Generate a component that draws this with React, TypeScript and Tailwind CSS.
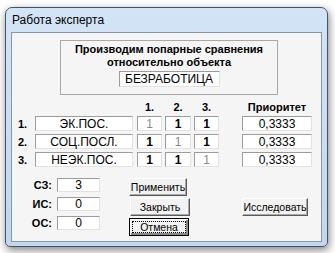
import React from 'react';

const sunken = 'bg-white border border-t-[#9c9c9c] border-l-[#9c9c9c] border-r-[#e2e2e2] border-b-[#e2e2e2] flex items-center justify-center';
const raised =
  'bg-[#f2f2f2] border border-t-white border-l-white border-r-[#5a5a5a] border-b-[#5a5a5a] shadow-[inset_-1px_-1px_0_#a9a9a9] flex items-center justify-center text-[10.5px] text-black leading-none';

const rows = [
  { n: '1.', name: 'ЭК.ПОС.', cells: ['1', '1', '1'], diag: 0 },
  { n: '2.', name: 'СОЦ.ПОСЛ.', cells: ['1', '1', '1'], diag: 1 },
  { n: '3.', name: 'НЕЭК.ПОС.', cells: ['1', '1', '1'], diag: 2 },
];

const cellWidths = ['w-[25px]', 'w-[26px]', 'w-[25px]'];

export default function App() {
  return (
    <div className="w-[335px] h-[253px] bg-white overflow-hidden font-['Liberation_Sans',Arial,sans-serif] text-black">
      <div className="ml-[5px] mt-[7px] w-[323px] h-[240px] rounded-t-[7px] rounded-b-[5px] border border-[#44546a] bg-gradient-to-b from-[#d3e4f6] to-[#c2d7ee] shadow-[1px_3px_8px_rgba(0,0,0,0.5)] flex flex-col px-[5px] pb-[4px]">
        <div className="h-[24px] flex items-center pl-[1px] text-[12px] leading-none">Работа эксперта</div>

        <div className="flex-1 border border-[#8796ab] bg-[#f5f5f5] flex flex-col">
          {/* question box */}
          <div className="mt-[7px] ml-[48px] w-[218px] h-[55px] border border-[#a9a9a9] flex flex-col items-center">
            <div className="mt-[2px] text-[11px] font-bold leading-[13px]">Производим попарные сравнения</div>
            <div className="text-[11px] font-bold leading-[13px]">относительно объекта</div>
            <div className={`${sunken} mt-[2px] w-[101px] h-[16px] text-[12px] leading-none`}>БЕЗРАБОТИЦА</div>
          </div>

          {/* matrix header */}
          <div className="mt-[6px] flex pl-[6px] h-[13px] items-center text-[11px] font-bold leading-none">
            <div className="w-[17px]" />
            <div className="w-[98px]" />
            <div className="ml-[4px] w-[25px] text-center">1.</div>
            <div className="ml-[3px] w-[26px] text-center">2.</div>
            <div className="ml-[3px] w-[25px] text-center">3.</div>
            <div className="ml-[23px] w-[70px] text-center">Приоритет</div>
          </div>

          {/* matrix rows */}
          <div className="mt-[2px] flex flex-col gap-[3px]">
            {rows.map((r) => (
              <div key={r.n} className="flex pl-[6px] h-[15px] items-stretch">
                <div className="w-[17px] flex items-end pb-[1px] text-[11px] font-bold leading-none">{r.n}</div>
                <div className={`${sunken} w-[98px] text-[12px] leading-none`}>{r.name}</div>
                {r.cells.map((c, i) => (
                  <div
                    key={i}
                    className={`${sunken} ${cellWidths[i]} ${i === 0 ? 'ml-[4px]' : 'ml-[3px]'} text-[12px] leading-none ${
                      i === r.diag ? 'text-[#8a8a8a]' : 'font-bold'
                    }`}
                  >
                    {c}
                  </div>
                ))}
                <div className={`${sunken} ml-[23px] w-[70px] text-[12px] leading-none`}>0,3333</div>
              </div>
            ))}
          </div>

          {/* bottom controls */}
          <div className="mt-[11px] flex">
            <div className="flex flex-col gap-[5px]">
              {[
                ['СЗ:', '3'],
                ['ИС:', '0'],
                ['ОС:', '0'],
              ].map(([l, v]) => (
                <div key={l} className="flex h-[14px] items-stretch">
                  <div className="w-[41px] pr-[1px] flex items-center justify-end text-[11px] font-bold leading-none">{l}</div>
                  <div className={`${sunken} ml-[4px] w-[43px] text-[12px] leading-none`}>{v}</div>
                </div>
              ))}
            </div>

            <div className="ml-[29px] flex flex-col gap-[2px]">
              <div className={`${raised} w-[58px] h-[18px]`}>Применить</div>
              <div className={`${raised} ml-[1px] w-[60px] h-[18px]`}>Закрыть</div>
              <div className="w-[60px] h-[18px] border border-black bg-[#f2f2f2] flex items-center justify-center p-[2px] shadow-[inset_1px_1px_0_white,inset_-2px_-2px_0_#8a8a8a]">
                <div className="w-full h-full border border-dotted border-black flex items-center justify-center text-[10.5px] leading-none">Отмена</div>
              </div>
            </div>

            <div className="ml-[52px] mt-[20px]">
              <div className={`${raised} w-[66px] h-[18px]`}>Исследовать</div>
            </div>
          </div>
        </div>
      </div>
    </div>
  );
}
